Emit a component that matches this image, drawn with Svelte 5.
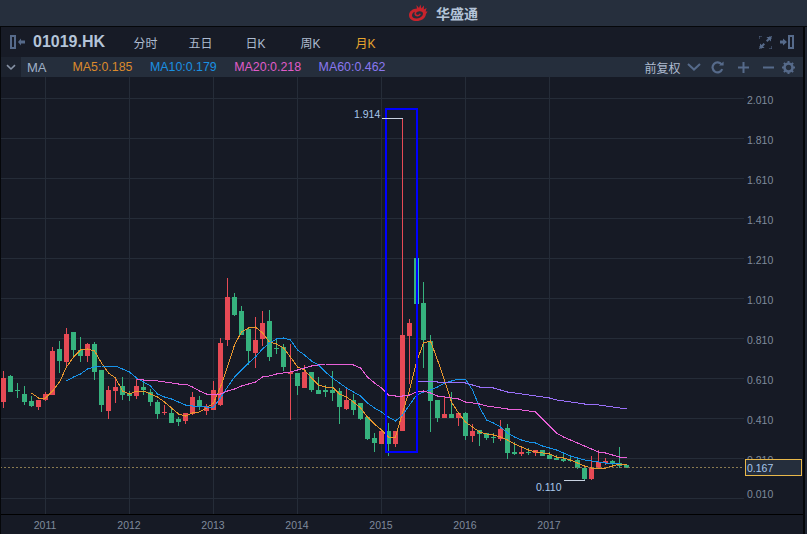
<script>
  // [bodyTop, bodyBottom, wickTop, wickBottom, colour] per month, 7px apart
  const raw = `378 402 371 408 r|376 392 375 392 g|390 391 383 398 g|394 402 386 405 g|401 406 396 407 g|400 407 400 410 r|394 400 392 401 r|351 395 347 395 r|349 361 341 373 g|334 362 328 368 r|332 350 332 358 g|350 356 337 362 g|344 356 343 362 r|344 372 342 380 g|370 405 370 412 g|390 411 386 419 r|387 391 377 403 r|386 395 377 400 g|393 396 391 401 g|386 396 379 399 r|387 390 382 395 g|392 402 389 406 g|402 414 400 419 g|412 413 405 415 r|413 423 409 423 g|419 422 417 426 g|413 421 413 424 r|397 414 392 415 r|400 407 396 410 g|406 411 404 415 r|390 410 381 410 r|343 405 338 406 r|297 340 278 346 r|297 315 293 316 g|311 335 306 335 g|329 351 329 365 g|340 353 317 368 r|323 339 311 346 r|321 357 310 361 g|348 349 339 354 g|347 367 344 371 g|372 374 344 420 r|373 386 373 395 g|372 388 365 388 r|372 390 372 392 g|390 394 377 394 g|390 392 385 397 g|390 393 371 401 g|391 407 388 424 g|400 409 387 410 r|400 410 394 415 g|403 419 403 420 g|417 439 417 440 g|438 443 433 452 g|431 444 431 444 r|431 444 423 456 g|431 444 431 447 r|335 431 118 431 r|323 336 319 384 r|258 304 258 304 g|303 340 282 368 g|341 401 335 432 g|400 418 400 422 g|414 418 397 418 r|414 418 392 418 g|413 418 413 426 r|413 436 412 440 g|431 436 424 442 r|430 434 430 446 g|433 438 433 440 g|437 438 433 443 g|429 439 420 441 r|428 453 424 459 g|452 454 442 455 g|452 454 448 456 r|452 453 448 455 g|450 453 450 456 r|450 456 450 456 g|455 459 452 459 g|458 460 455 460 g|459 461 452 462 g|460 461 456 462 g|460 468 457 469 g|468 479 468 480 g|468 479 456 480 r|462 468 450 468 r|461 463 458 465 r|461 464 460 467 g|463 466 447 468 g|465 468 465 468 g`;
  const candles = raw.split('|').map((s, k) => {
    const p = s.split(' ');
    return { k, top: +p[0], bot: +p[1], wt: +p[2], wb: +p[3], up: p[4] === 'r' };
  });

  const line = (start, ys) => ys.map((y, i) => `${3.5 + 7 * (start + i)},${y}`).join(' ');
  const ma5 = line(4, [393,398,398,391,382,367,357,350,349,351,363,373,378,391,394,391,391,394,397,402,408,414,416,413,412,408,403,387,367,345,332,328,327,333,342,344,348,357,367,370,378,385,387,387,394,397,402,408,417,424,430,437,437,413,390,362,343,341,360,380,402,413,422,427,432,434,435,437,440,444,447,450,452,453,454,457,458,460,463,466,468,468,468,466,464,465]);
  const ma10 = line(9, [381,377,374,369,367,366,366,366,369,372,378,382,386,394,397,399,402,405,406,406,407,407,398,387,377,370,363,357,349,343,339,338,340,350,355,361,365,372,378,383,388,392,396,403,408,412,417,421,415,405,395,392,390,387,383,381,379,379,390,407,420,423,427,433,437,440,442,443,446,448,450,453,456,458,460,461,462,463,463,464]);
  const ma20 = line(19, [379,380,380,381,382,383,384,384,387,391,394,395,394,391,389,386,384,382,377,376,374,373,372,370,368,366,365,364,364,364,364,365,368,377,383,388,395,396,396,395,392,391,393,396,397,398,399,402,403,404,406,407,408,409,409,410,411,412,419,426,433,437,440,443,446,449,452,453,455,457,457]);
  const ma60 = line(59, [381,381,381,382,382,382,382,383,385,387,387,388,390,392,393,394,395,396,397,398,400,401,402,403,404,404,405,406,407,408,409]);

  const hLines = [98,138,178,218,258,298,338,378,418,458,498];
  const ticks = [['2.010',104],['1.810',144],['1.610',184],['1.410',224],['1.210',264],['1.010',304],['0.810',344],['0.610',384],['0.410',424],['0.210',464],['0.010',498]];
  const years = [2011,2012,2013,2014,2015,2016,2017];
  const tabs = ['分时','五日','日K','周K','月K'];
  const mas = [['MA5:0.185','o'],['MA10:0.179','b'],['MA20:0.218','p'],['MA60:0.462','u']];
</script>

<div class="page">
  <header class="brand">
    <svg class="logo" width="20" height="18" viewBox="0 0 20 18">
      <path fill="#c8232c" d="M1 11 C1 7 5 4.6 9 4.4 L8.4 1 L11 4 L12.4 .6 L13.4 4.4 L16 1.6 L15.8 5.4 L18.6 4 L17.6 7.4 L19.6 7.6 L18 10 C17.6 14.6 13 17 8.6 17 C4.4 17 1 15 1 11 Z M4 11.4 C4 13.6 6.4 14.6 9 14.4 C12 14.2 14.6 12.6 15 10 C15.2 8 13.4 7 11.4 7.2 C8.6 7.4 7.4 9.4 8.6 10.4 C9.6 11.2 11.4 10.4 11.6 9.4 L12.8 10 C12.4 12 9.4 13.2 7.6 12 C6.2 11 6 9.2 7 7.8 C5 8.4 4 9.8 4 11.4 Z"/>
    </svg>
    <span class="brand-name">华盛通</span>
  </header>

  <div class="frame">
    <div class="toolbar">
      <svg class="ic-left" width="15" height="14" viewBox="0 0 15 14">
        <rect x="1" y="1" width="4" height="12" fill="none" stroke="#566a8a" stroke-width="2"/>
        <path d="M8 7 L11 3.5 V5.5 H15 V8.5 H11 V10.5 Z" fill="#566a8a"/>
      </svg>
      <strong class="code">01019.HK</strong>
      <nav class="tabs">
        {#each tabs as t, i}
          <span class="tab" class:active={i === 4}>{t}</span>
        {/each}
      </nav>
      <svg class="ic-full" width="13" height="13" viewBox="0 0 13 13">
        <path d="M0 3 V0 H3 M10 0 H13 V3 M13 10 V13 H10 M3 13 H0 V10" fill="none" stroke="#566a8a"/>
        <path d="M12 1 H7.4 L9 2.6 L7 4.6 L8.4 6 L10.4 4 L12 5.6 Z M1 12 H5.6 L4 10.4 L6 8.4 L4.6 7 L2.6 9 L1 7.4 Z" fill="#566a8a"/>
      </svg>
      <svg class="ic-right" width="15" height="14" viewBox="0 0 15 14">
        <path d="M0 5.5 H3 V3.5 L7 7 L3 10.5 V8.5 H0 Z" fill="#566a8a"/>
        <rect x="9" y="1" width="4" height="12" fill="none" stroke="#566a8a" stroke-width="2"/>
      </svg>
    </div>

    <div class="mabar">
      <span class="toggle">
        <svg width="10" height="7" viewBox="0 0 10 7"><path d="M1 1.2 L5 5 L9 1.2" fill="none" stroke="#8793a6" stroke-width="1.6"/></svg>
      </span>
      <span class="ma-name">MA</span>
      <div class="ma-vals">
        {#each mas as m}<span class={m[1]}>{m[0]}</span>{/each}
      </div>
      <span class="adjust">前复权</span>
      <svg class="ic-chev" width="14" height="8" viewBox="0 0 14 8"><path d="M1 1 L7 6.6 L13 1" fill="none" stroke="#566a8a" stroke-width="2"/></svg>
      <svg class="ic-refresh" width="13" height="13" viewBox="0 0 13 13"><path d="M10.6 3.4 A5 5 0 1 0 11.2 8.2" fill="none" stroke="#566a8a" stroke-width="2.2"/><path d="M8 4.4 H12.6 V0.4 Z" fill="#566a8a"/></svg>
      <svg class="ic-plus" width="11" height="11" viewBox="0 0 11 11"><path d="M0 5.5 H11 M5.5 0 V11" stroke="#566a8a" stroke-width="2"/></svg>
      <svg class="ic-minus" width="11" height="11" viewBox="0 0 11 11"><path d="M0 5.5 H11" stroke="#566a8a" stroke-width="2"/></svg>
      <svg class="ic-gear" width="13" height="13" viewBox="0 0 13 13">
        <circle cx="6.5" cy="6.5" r="4" fill="none" stroke="#566a8a" stroke-width="2.6"/>
        <path d="M6.5 0 V13 M0 6.5 H13 M1.9 1.9 L11.1 11.1 M11.1 1.9 L1.9 11.1" stroke="#566a8a" stroke-width="2" stroke-dasharray="2.2 8.6 2.2"/>
      </svg>
    </div>

    <svg class="chart" width="802" height="457" viewBox="1 77 802 457">
      <g class="grid">
        {#each hLines as y}<rect x="1" y={y} width="743" height="1"/>{/each}
        {#each years as _, i}<rect x={45 + 84 * i} y="77" width="1" height="437"/>{/each}
      </g>
      {#each ticks as t}<text class="tick" x="747" y={t[1]}>{t[0]}</text>{/each}
      <g>
        {#each candles as c}
          <g class={c.up ? 'up' : 'down'}>
            <rect x={3 + 7 * c.k} y={c.wt} width="1" height={c.wb - c.wt}/>
            <rect x={1 + 7 * c.k} y={c.top} width="5" height={c.bot - c.top}/>
          </g>
        {/each}
      </g>
      <polyline class="l ma5" points={ma5}/>
      <polyline class="l ma10" points={ma10}/>
      <polyline class="l ma20" points={ma20}/>
      <polyline class="l ma60" points={ma60}/>
      <rect class="mark" x="386" y="109" width="31" height="343"/>
      <rect x="418" y="258" width="1" height="46" fill="#30c8c0" shape-rendering="crispEdges"/>
      <path class="lead" d="M382 118.5 H403 M564 480.5 H585"/>
      <text class="peak" x="354" y="118">1.914</text>
      <text class="peak" x="536" y="491">0.110</text>
      <line class="last" x1="0" x2="744" y1="467.5" y2="467.5"/>
      <rect class="lastbox" x="745.5" y="459.5" width="56" height="16"/>
      <text class="peak" x="747" y="472">0.167</text>
      <rect x="1" y="514" width="802" height="1" fill="#000"/>
      {#each years as y, i}<text class="year" x={45 + 84 * i} y="529">{y}</text>{/each}
    </svg>
  </div>
</div>

<style>
  :global(body) { margin: 0; background: #161a25; }
  .page {
    width: 807px;
    height: 534px;
    overflow: hidden;
    display: flex;
    flex-direction: column;
    background: #1f2633;
    font-family: "Liberation Sans", "Noto Sans CJK SC", sans-serif;
  }
  .brand {
    height: 26px;
    flex: none;
    display: flex;
    align-items: center;
    padding-left: 408px;
    background: #262f3d;
    border-bottom: 1px solid #05070a;
  }
  .logo { margin-right: 8px; }
  .brand-name { font-size: 14px; font-weight: 700; color: #b4c4d8; }
  .frame {
    width: 802px;
    flex: 1;
    display: flex;
    flex-direction: column;
    border-left: 1px solid #05070a;
    border-right: 2px solid #05070a;
    background: #161a25;
  }
  .toolbar {
    height: 30px;
    flex: none;
    display: flex;
    align-items: center;
    background: #171b26;
    padding: 0 8px 0 9px;
  }
  .code {
    margin-left: 8px;
    width: 85px;
    font-size: 16px;
    color: #b4c4d8;
  }
  .tabs { display: flex; }
  .tab {
    width: 55px;
    text-align: center;
    font-size: 12px;
    color: #aebbd0;
  }
  .tab.active { color: #e8a52e; }
  .ic-full { margin-left: auto; }
  .ic-right { margin-left: 8px; }
  .mabar {
    height: 20px;
    flex: none;
    display: flex;
    align-items: center;
    background: #252e3c;
  }
  .toggle {
    width: 20px;
    height: 20px;
    display: flex;
    align-items: center;
    justify-content: center;
    background: #1c222e;
  }
  .ma-name { margin-left: 6px; font-size: 13px; color: #9fb0c6; }
  .ma-vals { margin-left: 26px; width: 572px; display: flex; gap: 17.5px; font-size: 12.4px; }
  .o { color: #dc8a2c; }
  .b { color: #1a90e2; }
  .p { color: #e05cc8; }
  .u { color: #8a78f0; }
  .adjust { font-size: 12px; color: #aebbd0; }
  .ic-chev { margin-left: 6px; }
  .ic-refresh { margin-left: 10px; }
  .ic-plus { margin-left: 14px; }
  .ic-minus { margin-left: 14px; }
  .ic-gear { margin-left: 8px; }
  .chart { display: block; }
  .grid rect { fill: #252c38; }
  .up rect, .down rect { shape-rendering: crispEdges; }
  .up rect { fill: #e64a55; }
  .down rect { fill: #36b27e; }
  .l { fill: none; stroke-width: 1; shape-rendering: crispEdges; }
  .ma5 { stroke: #e8962e; }
  .ma10 { stroke: #1792e8; }
  .ma20 { stroke: #e860d8; }
  .ma60 { stroke: #9a70f8; }
  .mark { fill: none; stroke: #0000ff; stroke-width: 2; }
  .lead { fill: none; stroke: #c8d2e0; stroke-width: 1; }
  .tick { font-size: 10.5px; fill: #7f8a9c; }
  .peak { font-size: 10.5px; fill: #a8c8ec; }
  .year { font-size: 10.5px; fill: #7f8a9c; text-anchor: middle; }
  .last { stroke: #8a7a50; stroke-dasharray: 2 2; }
  .lastbox { fill: #252e3c; stroke: #e8b84b; }
</style>
